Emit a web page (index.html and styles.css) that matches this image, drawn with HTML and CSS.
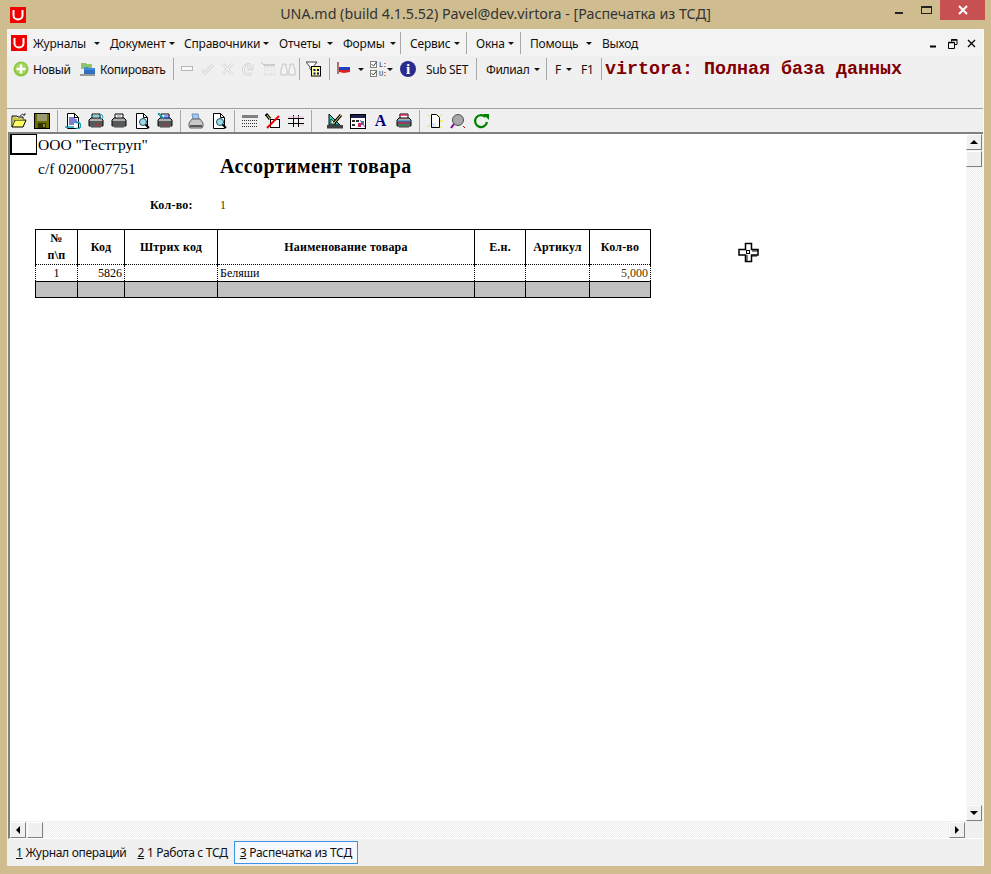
FILE: index.html
```html
<!DOCTYPE html>
<html lang="ru">
<head>
    <meta charset="UTF-8">
    <title>UNA.md</title>
    <link rel="stylesheet" href="styles.css">
</head>
<body>
    <svg class="sprite" width="0" height="0">
        <symbol id="printer" viewBox="0 0 16 16">
            <path d="M4 1h8v5H4z" fill="#fff" stroke="#000"/>
            <path d="M1 7l2-2h10l2 2v6H1z" fill="#b0b0b0" stroke="#000"/>
            <path d="M1 9h14M1 11h14" stroke="#000"/>
            <path d="M3 14h10" stroke="#404040"/>
        </symbol>
        <symbol id="doc" viewBox="0 0 16 16">
            <path d="M2.500.5h7l4 4v11h-11z" fill="#fff" stroke="#000"/>
            <path d="M9.500.5v4h4" fill="none" stroke="#000"/>
        </symbol>
        <symbol id="lens" viewBox="0 0 16 16">
            <circle cx="9" cy="9" r="3.500" fill="#9fd8e8" stroke="#205060"/>
            <path d="M11.500 11.500l3.500 3.500" stroke="#000" stroke-width="2"/>
        </symbol>
    </svg>

    <header class="titlebar">
        <svg class="logo" viewBox="0 0 16 16"><rect width="16" height="16" fill="#f00000"/><path d="M3.500 3v5.500a4.500 4 0 0 0 9 0V3" fill="none" stroke="#fff" stroke-width="2"/></svg>
        <div class="title">UNA.md (build 4.1.5.52) Pavel@dev.virtora - [Распечатка из ТСД]</div>
        <div class="win-btns">
            <span class="win-min"></span>
            <span class="win-max"></span>
            <span class="win-close">
                <svg width="10" height="10" viewBox="0 0 10 10"><path d="M1 1l8 8M9 1l-8 8" stroke="#fff" stroke-width="2"/></svg>
            </span>
        </div>
    </header>

    <div class="client">
        <nav class="menubar">
            <svg class="logo logo-menu" viewBox="0 0 16 16"><rect width="16" height="16" fill="#f00000"/><path d="M3.500 3v5.500a4.500 4 0 0 0 9 0V3" fill="none" stroke="#fff" stroke-width="2"/></svg>
            <span class="mi mi-j">Журналы<i class="caret"></i></span>
            <span class="mi mi-d">Документ<i class="caret"></i></span>
            <span class="mi mi-s">Справочники<i class="caret"></i></span>
            <span class="mi mi-o">Отчеты<i class="caret"></i></span>
            <span class="mi mi-f">Формы<i class="caret"></i></span>
            <span class="vsep"></span>
            <span class="mi mi-v">Сервис<i class="caret"></i></span>
            <span class="vsep"></span>
            <span class="mi mi-w">Окна<i class="caret"></i></span>
            <span class="vsep"></span>
            <span class="mi mi-h">Помощь<i class="caret"></i></span>
            <span class="mi">Выход</span>
            <div class="mdi-btns">
                <svg width="10" height="10" viewBox="0 0 10 10"><path d="M1 7.500h6" stroke="#000" stroke-width="2"/></svg>
                <svg width="10" height="10" viewBox="0 0 10 10"><path d="M3.500 2.500v-2h5.500v5h-2M.500 3.500h6v6h-6z" fill="none" stroke="#000"/><path d="M.500 3.500h6M3.500 1h5.500" stroke="#000" stroke-width="1.500"/></svg>
                <svg width="10" height="10" viewBox="0 0 10 10"><path d="M1 1l7 7M8 1l-7 7" stroke="#000" stroke-width="1.300"/></svg>
            </div>
        </nav>

        <div class="toolbar">
            <span class="tb tb-new">
                <svg class="ic" viewBox="0 0 16 16"><circle cx="8" cy="8" r="7.500" fill="#8cc63f"/><circle cx="8" cy="7.500" r="5.800" fill="#a4d65e"/><path d="M8 3.500v9M3.500 8h9" stroke="#fff" stroke-width="2.600"/></svg>
                Новый
            </span>
            <span class="tb tb-copy">
                <svg class="ic" viewBox="0 0 16 16"><path d="M1 2h5l1 1h5v5H1z" fill="#8fc46a"/><path d="M4 6h4l1 1h6v6H4z" fill="#3f8ad8"/><path d="M4 9h11v4H4z" fill="#2f6fc0"/><path d="M0 14h15" stroke="#404040"/></svg>
                Копировать
            </span>
            <span class="vsep vsep-tb"></span>
            <span class="dis">
                <svg class="ic-rect" viewBox="0 0 12 6"><rect x=".5" y=".5" width="11" height="4" fill="#f8f8f8" stroke="#b8b8b8"/></svg>
                <svg class="ic" viewBox="0 0 16 16"><path class="dis-out" d="M2 9l3 3 8-8"/><path class="dis-in" d="M2 9l3 3 8-8"/></svg>
                <svg class="ic" viewBox="0 0 16 16"><path class="dis-out" d="M3 3l9 10M12 3l-9 10"/><path class="dis-in" d="M3 3l9 10M12 3l-9 10"/></svg>
                <svg class="ic" viewBox="0 0 16 16"><path class="dis-out" d="M12 5a5 5 0 1 0 0 7M7 8h5V3"/><path class="dis-in" d="M12 5a5 5 0 1 0 0 7M7 8h5V3"/></svg>
                <svg class="ic" viewBox="0 0 16 16"><rect x="4" y="4" width="11" height="11" fill="#e2e2e2"/><path d="M1 1l4 4" stroke="#a0c8c0"/><rect x="4" y="3" width="11" height="2" fill="#cccccc"/><path d="M7 5v10M10 5v10M13 5v10M4 8h11M4 11h11" stroke="#f4f4f4"/></svg>
                <svg class="ic" viewBox="0 0 16 16"><path d="M3 3h3v4l1 2v5H1V9zM10 3h3l2 6v5H9V9l1-2z" fill="#f4f4f4" stroke="#c4c4c4"/></svg>
            </span>
            <span class="vsep vsep-tb2"></span>
            <svg class="ic" viewBox="0 0 16 16"><path d="M0 1h11L7 6v5L4 8V6z" fill="#fff" stroke="#404040"/><rect x="5.500" y="5.500" width="9" height="9.500" fill="#ffffa0" stroke="#000"/><path d="M7.500 8h2v2h-2zM11 8h2v2h-2zM7.500 11.500h2v2h-2zM11 11.500h2v2h-2z" fill="#000060"/></svg>
            <span class="vsep vsep-tb3"></span>
            <svg class="ic-flag" viewBox="0 0 14 16"><path d="M1 1v12" stroke="#a04040" stroke-width="1.500"/><path d="M2 3l5 2 6 1v2H2z" fill="#f4f4f4"/><path d="M2 6h11v3l-11 1z" fill="#2040c0"/><path d="M2 9h11v2l-6 1-5-1z" fill="#e02020"/></svg>
            <i class="caret caret-flag"></i>
            <svg class="ic ic-checks" viewBox="0 0 16 18">
                <rect x=".5" y="1.500" width="6" height="6" fill="#fff" stroke="#808080"/><path d="M1.500 4l2 2 3-4" fill="none" stroke="#404040"/>
                <rect x=".5" y="10.500" width="6" height="6" fill="#fff" stroke="#808080"/><path d="M1.500 13l2 2 3-4" fill="none" stroke="#404040"/>
                <text x="9" y="7" class="tiny">L:</text><text x="9" y="16" class="tiny">U:</text>
            </svg>
            <i class="caret caret-checks"></i>
            <svg class="ic ic-info" viewBox="0 0 16 16"><circle cx="8" cy="8" r="8" fill="#2b2b8c"/><text x="8" y="13" class="info-i">i</text></svg>
            <span class="tb tb-sub">Sub SET</span>
            <span class="vsep vsep-sub"></span>
            <span class="tb tb-fil">Филиал<i class="caret"></i></span>
            <span class="vsep vsep-fil"></span>
            <span class="tb tb-f">F<i class="caret"></i></span>
            <span class="tb tb-f1">F1</span>
            <span class="vsep vsep-f1"></span>
            <span class="dbname">virtora: Полная база данных</span>
        </div>

        <div class="spacer"></div>

        <div class="tools">
            <span class="tool"><svg class="ic" viewBox="0 0 16 16"><path d="M1 14V3h5l1 1h5v2" fill="none" stroke="#000"/><path d="M1 14l3-7h11l-3 7z" fill="#ffff66" stroke="#000"/><path d="M1.500 4v9l2-6h8V5H6L5 4z" fill="#c8c840"/><path d="M9 3q2-3 5-1M14 2v-2M14 2h-2" fill="none" stroke="#404040"/></svg></span>
            <span class="tool"><svg class="ic" viewBox="0 0 16 16"><rect x=".5" y=".5" width="15" height="15" fill="#6b6b00" stroke="#000"/><rect x="3" y="1" width="10" height="7" fill="#9a9a70"/><rect x="4" y="10" width="8" height="5" fill="#303000"/><rect x="9" y="11" width="2" height="3" fill="#8a8a50"/></svg></span>
            <span class="tool-sep"></span>
            <span class="tool"><svg class="ic" viewBox="0 0 16 16"><use href="#doc"/><path d="M4 5h6M4 7h8M4 9h8M4 11h5" stroke="#0000a0"/><path d="M0 14h9M11 15a3 3 0 1 0 0-5" fill="none" stroke="#10a0b0" stroke-width="1.500"/></svg></span>
            <span class="tool"><svg class="ic" viewBox="0 0 16 16"><use href="#printer"/><path d="M3 3h9M12 1q3 1 3 3t-3 2" fill="none" stroke="#10a0b0"/><path d="M7 12h4" stroke="#e02020"/></svg></span>
            <span class="tool"><svg class="ic" viewBox="0 0 16 16"><use href="#printer"/><path d="M6 3h4" stroke="#808080"/></svg></span>
            <span class="tool"><svg class="ic" viewBox="0 0 16 16"><use href="#doc"/><use href="#lens"/></svg></span>
            <span class="tool"><svg class="ic" viewBox="0 0 16 16"><use href="#printer"/><path d="M1 0l6 6" stroke="#10a0b0" stroke-width="2"/><path d="M7 3h5M7 5h5" stroke="#2040e0"/><path d="M7 12h4" stroke="#e02020"/></svg></span>
            <span class="tool-sep"></span>
            <span class="tool"><svg class="ic" viewBox="0 0 16 16"><path d="M4 1h6l1 5H5z" fill="#a8c8f0" stroke="#7090c0"/><path d="M1 10l3-4h8l3 4v3l-1 2H2l-1-2z" fill="#c8c8c8" stroke="#606060"/><path d="M2 13h12" stroke="#303030" stroke-width="1.500"/></svg></span>
            <span class="tool"><svg class="ic" viewBox="0 0 16 16"><use href="#doc"/><use href="#lens"/></svg></span>
            <span class="tool-sep"></span>
            <span class="tool"><svg class="ic" viewBox="0 0 16 16"><rect y="2" width="16" height="3" fill="#808080"/><path d="M0 7.500h16M0 10.500h16M0 13.500h16" stroke="#303030" stroke-dasharray="1 1"/></svg></span>
            <span class="tool"><svg class="ic" viewBox="0 0 16 16"><rect x="5.500" y="6.500" width="9" height="8" fill="#fff" stroke="#000"/><path d="M1 1l4 5" stroke="#000" stroke-width="3"/><path d="M2 2l3 4" stroke="#f0e040"/><path d="M2 15L14 3" stroke="#f00000" stroke-width="2"/></svg></span>
            <span class="tool"><svg class="ic" viewBox="0 0 16 16"><path d="M0 5.500h16M0 10.500h16" stroke="#000"/><path d="M5.500 2v12M10.500 2v12" stroke="#000"/><path d="M11 12h5M0 4h16" stroke="#f0c0e0"/></svg></span>
            <span class="tool-sep"></span>
            <span class="tool-blank"></span>
            <span class="tool"><svg class="ic" viewBox="0 0 16 16"><path d="M2 1v11h11z" fill="#30c8c0" stroke="#000"/><path d="M4 6v5h5z" fill="#fff" stroke="#000" stroke-width=".7"/><rect y="12" width="16" height="3.500" fill="#404040"/><path d="M7 10l7-8" stroke="#000" stroke-width="3"/><path d="M7 10l7-8" stroke="#f0e040"/></svg></span>
            <span class="tool"><svg class="ic" viewBox="0 0 16 16"><rect x=".5" y="1.500" width="15" height="14" fill="#fff" stroke="#000"/><rect x="1" y="2" width="14" height="3" fill="#202050"/><path d="M2 7h3v2H2zM6 7h3v2H6zM2 11h3v2H2z" fill="#303030"/><path d="M8 10h3v4H8z" fill="#d02060"/><path d="M11 8h3v4h-3z" fill="#20a060"/><path d="M10 7l5 7" stroke="#8040c0"/></svg></span>
            <span class="tool tool-a">A</span>
            <span class="tool"><svg class="ic" viewBox="0 0 16 16"><use href="#printer"/><path d="M3 2h9" stroke="#d02060" stroke-width="1.500"/><path d="M1 8h14" stroke="#2080d0"/><path d="M2 10h12" stroke="#e02060"/><path d="M2 12h12" stroke="#20a060"/></svg></span>
            <span class="tool-sep"></span>
            <span class="tool"><svg class="ic" viewBox="0 0 16 16"><path d="M0 1l3 3M15 1l-3 3M0 14l3-2M16 8h-3M15 15l-2-2" stroke="#f0f000"/><path d="M4.500 1.500h5l3 3v10h-8z" fill="#fff" stroke="#000"/><path d="M5 10h4v4H5z" fill="#d8e8ff"/></svg></span>
            <span class="tool"><svg class="ic" viewBox="0 0 16 16"><circle cx="8" cy="7" r="5.500" fill="#a8a8a8" stroke="#505050"/><path d="M4 11l-3 4" stroke="#8000a0" stroke-width="2"/><path d="M13 13l2 2" stroke="#c00000"/></svg></span>
            <span class="tool"><svg class="ic" viewBox="0 0 16 16"><path d="M12.500 4a6 6 0 1 0 1.500 5" fill="none" stroke="#008000" stroke-width="2.200"/><path d="M10 1h6v6z" fill="#008000"/></svg></span>
        </div>

        <div class="doc-wrap">
            <div class="doc-row">
                <main class="page">
                    <div class="head-line">
                        <span class="box"></span>
                        <span class="firm">ООО "Тестгруп"</span>
                    </div>
                    <div class="head-line2">
                        <span class="cf">c/f 0200007751</span>
                        <span class="rep-title">Ассортимент товара</span>
                    </div>
                    <div class="qty-line">
                        <span class="qty-label">Кол-во:</span>
                        <span class="qty-val">1</span>
                    </div>
                    <table class="grid">
                        <colgroup>
                            <col class="c1"><col class="c2"><col class="c3"><col class="c4"><col class="c5"><col class="c6"><col class="c7">
                        </colgroup>
                        <thead>
                            <tr>
                                <th>№<br>п\п</th>
                                <th>Код</th>
                                <th>Штрих код</th>
                                <th>Наименование товара</th>
                                <th>Е.н.</th>
                                <th>Артикул</th>
                                <th>Кол-во</th>
                            </tr>
                        </thead>
                        <tbody>
                            <tr>
                                <td class="ctr">1</td>
                                <td class="num">5826</td>
                                <td></td>
                                <td>Беляши</td>
                                <td></td>
                                <td></td>
                                <td class="num amount">5,000</td>
                            </tr>
                        </tbody>
                        <tfoot>
                            <tr><td></td><td></td><td></td><td></td><td></td><td></td><td></td></tr>
                        </tfoot>
                    </table>
                    <svg class="cursor" width="22" height="21" viewBox="0 0 22 21">
                        <path d="M7.500 1.500h6v6h6.500v5.500h-6.500v6.500h-6v-6.500H1v-5.500h6.500z" fill="#fff" stroke="#000" stroke-width="1.500"/>
                        <path d="M9 13v6M14 9h6M14 14h5" stroke="#000" stroke-width="1"/>
                        <rect x="8.500" y="8.500" width="3" height="3" fill="#fff" stroke="#000"/>
                    </svg>
                </main>
                <div class="vscroll">
                    <span class="sb-btn"><i class="tri tri-up"></i></span>
                    <span class="sb-btn sb-thumb"></span>
                    <span class="sb-track"></span>
                    <span class="sb-btn"><i class="tri tri-down"></i></span>
                </div>
            </div>
            <div class="hscroll">
                <span class="sb-btn"><i class="tri tri-left"></i></span>
                <span class="sb-btn"></span>
                <span class="sb-track"></span>
                <span class="sb-btn"><i class="tri tri-right"></i></span>
                <span class="sb-corner"></span>
            </div>
        </div>

        <div class="tabs">
            <span class="tab"><u>1</u> Журнал операций</span>
            <span class="tab"><u>2</u> 1 Работа с ТСД</span>
            <span class="tab tab-on"><u>3</u> Распечатка из ТСД</span>
        </div>
    </div>
</body>
</html>
```

FILE: styles.css
```css
* {
    box-sizing: border-box;
}
html, body {
    margin: 0;
    height: 874px;
    overflow: hidden;
}
body {
    display: flex;
    flex-direction: column;
    background-color: #cfbd90;
    font-family: "Noto Sans", "Liberation Sans", sans-serif;
    font-size: 12px;
    color: #111;
}
.sprite {
    position: absolute;
}

/* window title */
.titlebar {
    display: flex;
    height: 29px;
    flex: none;
    padding-left: 10px;
}
.logo {
    width: 16px;
    height: 16px;
    margin-top: 7px;
    flex: none;
}
.title {
    width: 939px;
    padding-top: 4px;
    text-align: center;
    font-size: 14.25px;
    line-height: 20px;
    color: #333;
}
.win-btns {
    display: flex;
    position: absolute;
    top: 0;
    right: 6px;
    height: 20px;
}
.win-min {
    width: 8px;
    height: 2px;
    margin: 12px 18px 0 0;
    background: #222;
}
.win-max {
    width: 11px;
    height: 8px;
    margin: 6px 8px 0 0;
    border: 1px solid #222;
    border-top-width: 2px;
}
.win-close {
    display: flex;
    align-items: center;
    justify-content: center;
    width: 45px;
    height: 20px;
    background: #c75050;
}

/* client area */
.client {
    flex: 1;
    display: flex;
    flex-direction: column;
    margin: 0 7px 8px 7px;
    background: #f0f0f0;
    border-top: 1px solid #f8f8f8;
    border-right: 1px solid #f8f8f8;
}
.menubar {
    display: flex;
    align-items: center;
    height: 26px;
    flex: none;
    padding-left: 4px;
    background: #f3f3f3;
    letter-spacing: -0.2px;
}
.logo-menu {
    margin-top: 0;
    margin-right: 6px;
}
.mi {
    display: flex;
    align-items: center;
    white-space: nowrap;
}
.caret {
    display: inline-block;
    width: 0;
    height: 0;
    border: 3px solid transparent;
    border-top: 3px solid #111;
    border-bottom: 0;
    margin-left: 5px;
}
.mi-j { width: 77px; }
.mi-j .caret { margin-left: 8px; }
.mi-d { width: 74px; }
.mi-d .caret { margin-left: 3px; }
.mi-s { width: 95px; }
.mi-s .caret { margin-left: 3px; }
.mi-o { width: 64px; }
.mi-o .caret { margin-left: 6px; }
.mi-f { width: 57px; }
.mi-v { width: 56px; }
.mi-v .caret { margin-left: 3px; }
.mi-w { width: 44px; }
.mi-w .caret { margin-left: 3px; }
.mi-h { width: 72px; }
.mi-h .caret { margin-left: 8px; }
.vsep {
    width: 1px;
    height: 22px;
    background: #a8a8a8;
    flex: none;
    margin-right: 9px;
}
.mdi-btns {
    display: flex;
    gap: 9px;
    margin-left: auto;
    padding-right: 6px;
    padding-top: 2px;
}

.toolbar {
    display: flex;
    align-items: center;
    height: 26px;
    flex: none;
    padding-left: 6px;
    letter-spacing: -0.35px;
}
.ic {
    width: 16px;
    height: 16px;
    flex: none;
}
.tb {
    display: flex;
    align-items: center;
    white-space: nowrap;
}
.tb-new { gap: 4px; width: 67px; }
.tb-copy { gap: 4px; width: 93px; }
.vsep-tb { margin-right: 7px; }
.dis {
    display: flex;
    align-items: center;
    gap: 4px;
    width: 118px;
}
.dis-out {
    fill: none;
    stroke: #c8c8c8;
    stroke-width: 2.6;
}
.dis-in {
    fill: none;
    stroke: #f6f6f6;
    stroke-width: 1.2;
}
.ic-rect {
    width: 12px;
    height: 6px;
    margin-right: 3px;
}
.vsep-tb2 { margin-right: 6px; }
.vsep-tb3 { margin-left: 7px; margin-right: 7px; }
.ic-flag {
    width: 14px;
    height: 16px;
    flex: none;
}
.caret-flag { margin-left: 7px; margin-right: 6px; }
.ic-checks { height: 18px; }
.tiny {
    font-family: "Liberation Mono", monospace;
    font-size: 7px;
    fill: #222;
}
.caret-checks { margin-left: 1px; margin-right: 7px; }
.ic-info { margin-right: 10px; }
.info-i {
    font-family: "Liberation Serif", serif;
    font-weight: bold;
    font-size: 15px;
    fill: #fff;
    text-anchor: middle;
}
.tb-sub { width: 50px; }
.tb-fil { width: 60px; }
.vsep-sub { margin-right: 9px; }
.vsep-fil { margin-right: 8px; }
.tb-f { width: 26px; }
.tb-f1 { width: 20px; }
.vsep-f1 { margin-right: 3px; }
.dbname {
    font-family: "Liberation Mono", monospace;
    font-weight: bold;
    font-size: 18.33px;
    letter-spacing: 0;
    color: #800000;
    white-space: nowrap;
}

.spacer {
    height: 27px;
    flex: none;
    border-bottom: 1px solid #a0a0a0;
}
.tools {
    display: flex;
    align-items: center;
    height: 23px;
    flex: none;
}
.tool {
    display: flex;
    align-items: center;
    justify-content: center;
    width: 23px;
    height: 23px;
    flex: none;
}
.tool-sep {
    width: 8px;
    height: 22px;
    flex: none;
    background: linear-gradient(#a8a8a8, #a8a8a8) center / 1px 100% no-repeat;
}
.tool-blank {
    width: 8px;
    flex: none;
}
.tool-a {
    font-family: "Liberation Serif", serif;
    font-weight: bold;
    font-size: 16px;
    color: #000080;
}

/* document */
.doc-wrap {
    flex: 1;
    display: flex;
    flex-direction: column;
    min-height: 0;
    margin-left: 1px;
    border-left: 2px solid #808080;
    border-top: 2px solid #808080;
    border-bottom: 1px solid #fff;
}
.doc-row {
    flex: 1;
    display: flex;
    min-height: 0;
}
.page {
    flex: 1;
    position: relative;
    background: #fff;
    font-family: "Liberation Serif", serif;
    color: #000;
}
.head-line {
    display: flex;
    align-items: center;
    height: 21px;
}
.box {
    width: 27px;
    height: 21px;
    border: 1px solid #000;
    border-width: 1px 1px 2px 2px;
    margin-right: 1px;
}
.firm {
    font-size: 15.5px;
}
.head-line2 {
    display: flex;
    align-items: center;
    height: 24px;
    padding-left: 28px;
}
.cf {
    width: 182px;
    margin-top: 4px;
    font-size: 15.5px;
}
.rep-title {
    margin-top: -2px;
    font-size: 20px;
    font-weight: bold;
    letter-spacing: .44px;
}
.qty-line {
    display: flex;
    align-items: center;
    height: 14px;
    margin-top: 19px;
    padding-left: 140px;
    font-size: 12px;
}
.qty-label {
    width: 70px;
    font-weight: bold;
    letter-spacing: .25px;
}
.qty-val {
    color: #5a3000;
}
.grid {
    width: 615px;
    margin: 17px 0 0 25px;
    border-collapse: collapse;
    table-layout: fixed;
    font-size: 12px;
}
.c1 { width: 42px; }
.c2 { width: 47px; }
.c3 { width: 93px; }
.c4 { width: 257px; }
.c5 { width: 51px; }
.c6 { width: 64px; }
.c7 { width: 61px; }
.grid th, .grid td {
    padding: 0 2px;
    border: 1px solid #000;
}
.grid th {
    height: 34px;
    line-height: 17px;
    font-weight: bold;
    letter-spacing: .2px;
    border-bottom-style: dotted;
}
.grid tbody td {
    height: 17px;
    line-height: 14px;
    border-style: dotted;
    border-bottom-style: solid;
}
.grid tfoot td {
    height: 16px;
    background: #c0c0c0;
}
.ctr { text-align: center; }
.num { text-align: right; }
.amount { color: #5a3000; }
.cursor {
    position: absolute;
    left: 728px;
    top: 108px;
}

/* scroll bars */
.vscroll {
    width: 16px;
    margin-right: 1px;
    flex: none;
    display: flex;
    flex-direction: column;
    gap: 1px;
}
.hscroll {
    height: 16px;
    flex: none;
    display: flex;
    gap: 1px;
    margin-top: 1px;
    margin-right: 1px;
}
.sb-btn {
    display: flex;
    align-items: center;
    justify-content: center;
    width: 16px;
    height: 16px;
    flex: none;
    background: #f0f0f0;
    border: 1px solid #fff;
    border-right-color: #808080;
    border-bottom-color: #808080;
}
.sb-track {
    flex: 1;
    background: repeating-conic-gradient(#ececec 0 25%, #fff 0 50%) 0 0 / 2px 2px;
}
.sb-corner {
    width: 16px;
    flex: none;
}
.tri {
    width: 0;
    height: 0;
    border: 4px solid transparent;
}
.tri-up { border-top: 0; border-bottom-color: #000; }
.tri-down { border-bottom: 0; border-top-color: #000; }
.tri-left { border-left: 0; border-right-color: #000; }
.tri-right { border-right: 0; border-left-color: #000; }

/* open windows */
.tabs {
    flex: none;
    display: flex;
    align-items: center;
    height: 27px;
    padding-left: 9px;
    gap: 11px;
    letter-spacing: -0.3px;
}
.tab {
    white-space: nowrap;
}
.tab-on {
    display: flex;
    align-items: center;
    gap: 3px;
    height: 23px;
    margin-left: -5px;
    padding: 0 5px;
    background: #f5f9fd;
    border: 1px solid #3d94e6;
}
```
